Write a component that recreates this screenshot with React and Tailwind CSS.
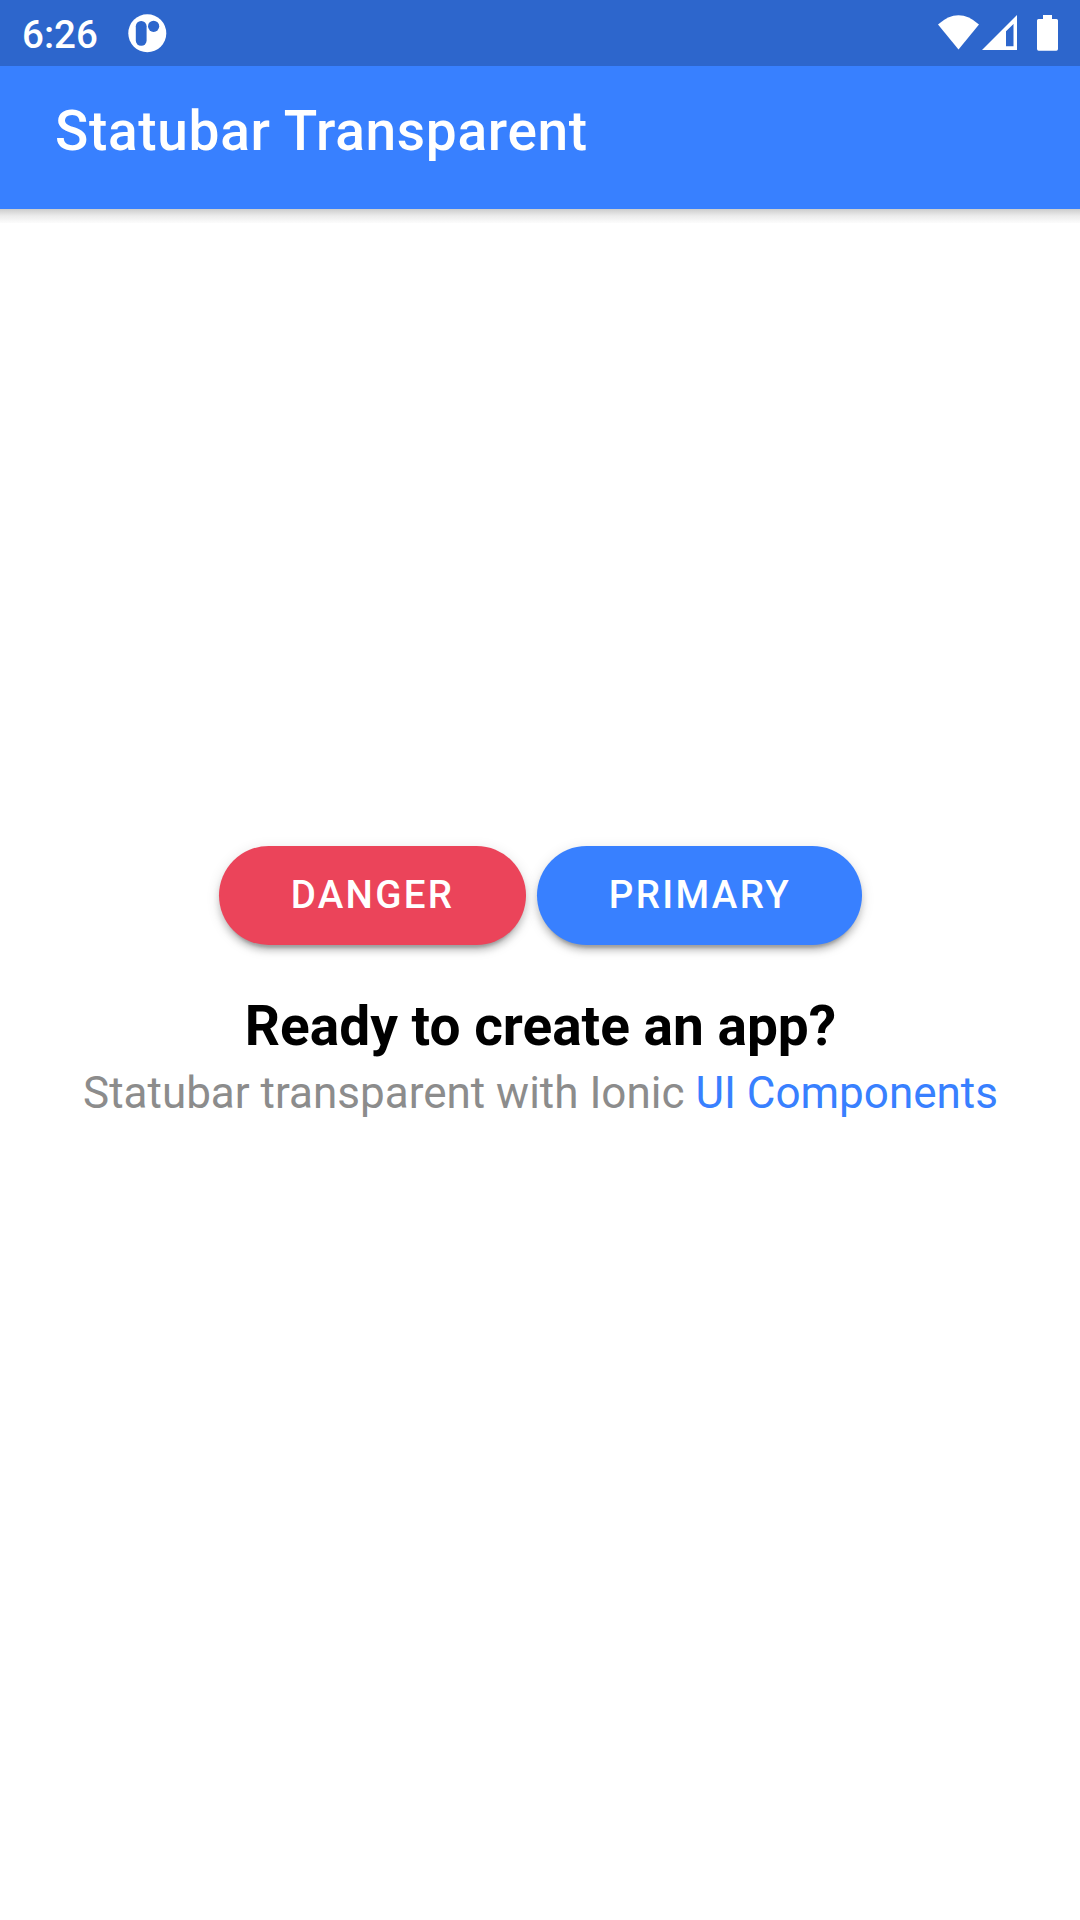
export default function App() {
  return (
    <div className="flex h-[1920px] w-[1080px] flex-col overflow-hidden bg-white font-['Roboto',sans-serif]">
      <header className="h-[209px] shrink-0 bg-[#3880ff] text-white">
        <div className="flex h-[66px] items-center bg-[#2d66cc] pl-[22px]">
          <span className="w-[106px] pt-[3px] text-[38.5px] font-medium leading-[66px]">6:26</span>
          <svg width="39" height="66" viewBox="128 0 39 66" fill="none">
            <circle cx="147.3" cy="33.3" r="19" fill="white" />
            <rect x="135.8" y="21" width="10.8" height="24.7" rx="5.2" fill="#2d66cc" />
            <circle cx="153.6" cy="26.3" r="5.6" fill="#2d66cc" />
          </svg>
          <svg className="ml-auto" width="142" height="66" viewBox="938 0 142 66" fill="white">
            <path d="M938 24.5 Q958.5 6 979 24.5 L958.5 49.6Z" />
            <path fillRule="evenodd" d="M1017 15V50H982ZM1013.5 24 1006 31.2V46.2H1013.5Z" />
            <path d="M1043 15H1052V19H1056.5Q1058 19 1058 20.5V49Q1058 50.7 1056.3 50.7H1038.7Q1037 50.7 1037 49V20.5Q1037 19 1038.5 19H1043Z" />
          </svg>
        </div>
        <h1 className="pl-[55px] pt-[32px] text-[55px] font-medium leading-[66px] tracking-[0.0125em]">Statubar Transparent</h1>
      </header>
      <div className="h-[14px] shrink-0 bg-linear-to-b from-[#cdcdcd] via-[#ececec] to-[#fcfcfc]" />
      <main className="flex flex-col items-center pt-[623px]">
        <div className="flex gap-[11px] text-[38.5px] font-medium tracking-[0.06em] text-white">
          <button className="h-[99px] w-[307px] rounded-full bg-[#eb445a] pb-[2px] pl-px shadow-[0_8px_3px_-5px_rgba(0,0,0,0.2),0_6px_6px_0_rgba(0,0,0,0.16),0_3px_14px_0_rgba(0,0,0,0.12)]">DANGER</button>
          <button className="h-[99px] w-[325px] rounded-full bg-[#3880ff] pb-[2px] pl-[2px] shadow-[0_8px_3px_-5px_rgba(0,0,0,0.2),0_6px_6px_0_rgba(0,0,0,0.16),0_3px_14px_0_rgba(0,0,0,0.12)]">PRIMARY</button>
        </div>
        <strong className="mt-[45px] pl-px text-[55px] font-bold leading-[72px]">Ready to create an app?</strong>
        <p className="mt-px pl-px text-[44px] leading-[61px] text-[#8c8c8c]">Statubar transparent with Ionic <a className="text-[#3880ff]">UI Components</a></p>
      </main>
    </div>
  );
}
